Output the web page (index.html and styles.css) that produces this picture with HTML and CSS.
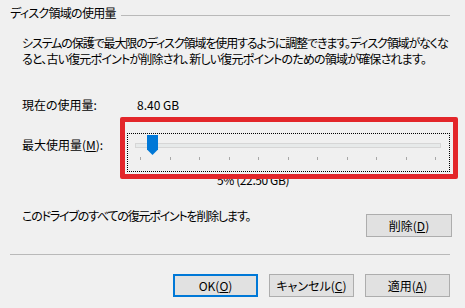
FILE: index.html
```html
<!DOCTYPE html>
<html lang="ja">
<head>
<meta charset="utf-8">
<link rel="stylesheet" href="styles.css">
</head>
<body>
<div class="dialog">
  <div class="group-title">
    <span class="title-text">ディスク領域の使用量</span>
    <span class="title-line"></span>
  </div>
  <p class="desc"><span class="desc-line1">システムの保護で最大限のディスク領域を使用するように調整できます。ディスク領域がなくな</span><br><span class="desc-line2">ると、古い復元ポイントが削除され、新しい復元ポイントのための領域が確保されます。</span></p>
  <div class="usage-row">
    <span class="usage-label">現在の使用量:</span>
    <span class="usage-value">8.40 GB</span>
  </div>
  <div class="slider-row">
    <span class="slider-label">最大使用量(<u>M</u>):</span>
    <div class="slider">
      <div class="track"></div>
      <svg class="thumb" width="11" height="20" viewBox="0 0 11 20"><path d="M0 0H11V14.5L5.5 20L0 14.5Z" fill="#0078d7"/></svg>
      <div class="ticks">
        <i></i><i></i><i></i><i></i><i></i><i></i><i></i><i></i><i></i><i></i><i></i>
      </div>
      <div class="highlight"></div>
    </div>
  </div>
  <div class="percent">5% (22.50 GB)</div>
  <div class="delete-row">
    <span class="delete-text">このドライブのすべての復元ポイントを削除します。</span>
    <button class="btn btn-delete">削除(<u>D</u>)</button>
  </div>
  <div class="separator"></div>
  <div class="actions">
    <button class="btn btn-default">OK(<u>O</u>)</button>
    <button class="btn">キャンセル(<u>C</u>)</button>
    <button class="btn">適用(<u>A</u>)</button>
  </div>
</div>
</body>
</html>
```

FILE: styles.css
```css
html, body {
  margin: 0;
  padding: 0;
  background: #f0f0f0;
}
body {
  width: 465px;
  height: 308px;
  overflow: hidden;
  font-family: "Noto Sans CJK JP", "Noto Sans", sans-serif;
  font-size: 12px;
  line-height: 16px;
  color: #000;
  font-feature-settings: "palt";
}
.dialog {
  padding-top: 5px;
}
.group-title {
  display: flex;
  align-items: center;
  padding: 0 15px 0 10px;
  height: 16px;
}
.title-text {
  white-space: nowrap;
  letter-spacing: -0.7px;
}
.title-line {
  flex: 1;
  height: 1px;
  background: #b9b9b9;
  margin-left: 5px;
  margin-top: 4px;
}
.desc {
  margin: 14px 0 0 0;
  padding-left: 22px;
  white-space: nowrap;
}
.desc-line1 {
  letter-spacing: -1.1px;
}
.desc-line2 {
  letter-spacing: -0.8px;
}
.usage-row {
  display: flex;
  margin-top: 30px;
  padding-left: 22px;
}
.usage-label {
  width: 115px;
}
.slider-row {
  display: flex;
  margin-top: 20px;
  padding-left: 22px;
}
.slider-label {
  width: 105px;
  margin-top: 4px;
}
.slider {
  position: relative;
  width: 321px;
  height: 37px;
  border: 1px dotted #000;
}
.track {
  margin: 9px 0 0 7px;
  width: 304px;
  height: 3px;
  background: #e7eaea;
  border: 1px solid #d6d6d6;
}
.thumb {
  position: absolute;
  left: 19px;
  top: 1px;
  display: block;
}
.ticks {
  display: flex;
  justify-content: space-between;
  margin: 9px 0 0 12px;
  width: 296px;
  height: 3px;
}
.ticks i {
  width: 1px;
  height: 3px;
  background: #a8a8a8;
}
.highlight {
  position: absolute;
  left: -8px;
  top: -17px;
  width: 328px;
  height: 52px;
  border: 5px solid #e3262a;
  border-radius: 2px;
}
.percent {
  margin-top: 0;
  padding-left: 217px;
  letter-spacing: -0.4px;
}
.delete-row {
  display: flex;
  align-items: flex-start;
  margin-top: 20px;
  padding: 0 13px 0 22px;
}
.delete-text {
  white-space: nowrap;
  letter-spacing: -1.2px;
}
.btn {
  font: inherit;
  font-feature-settings: "palt";
  width: 85px;
  height: 23px;
  padding: 0;
  margin: 0;
  background: #e1e1e1;
  border: 1px solid #adadad;
  color: #000;
  text-align: center;
  line-height: 20px;
}
.btn-delete {
  width: 86px;
  margin-left: auto;
  margin-top: 6px;
}
.btn-default {
  border: 2px solid #0078d7;
}
.separator {
  margin: 17px 15px 0 10px;
  height: 1px;
  background: #b9b9b9;
}
.actions {
  display: flex;
  justify-content: flex-end;
  gap: 11px;
  margin-top: 19px;
  padding-right: 15px;
}
```
